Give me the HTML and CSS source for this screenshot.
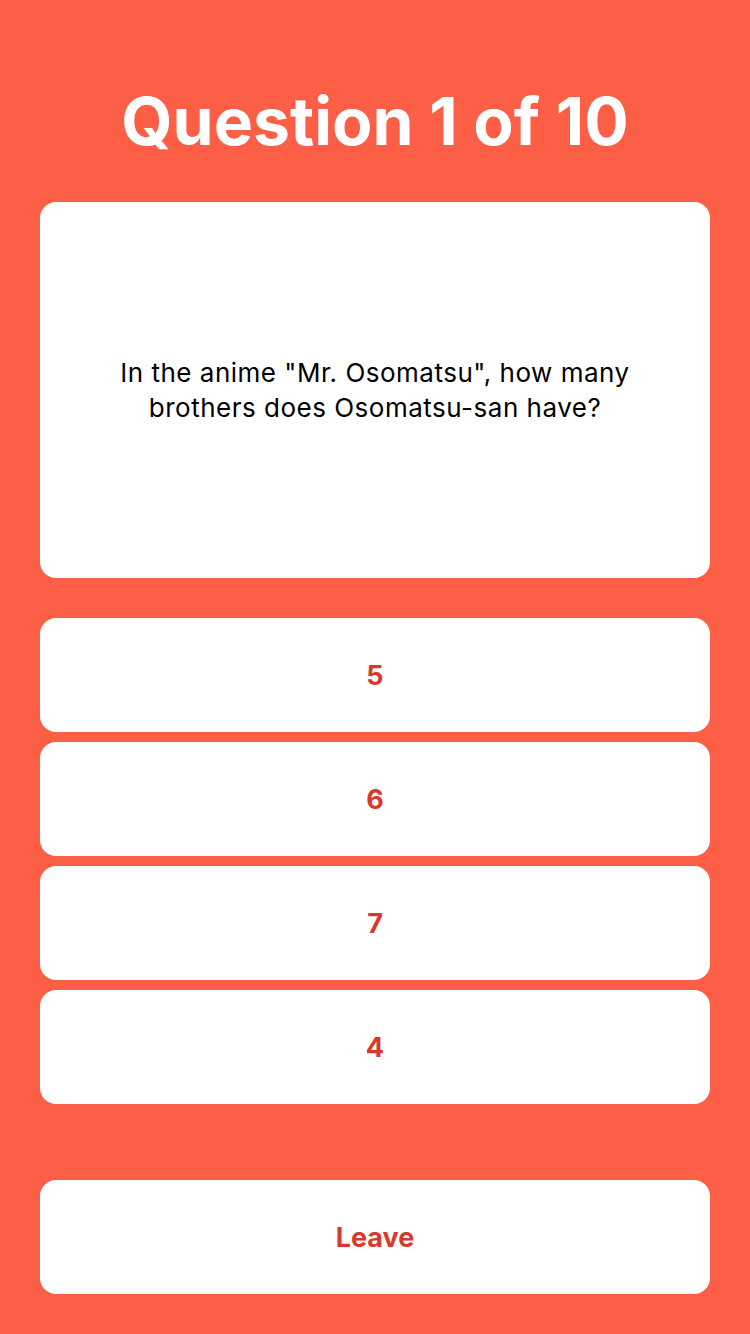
FILE: index.html
```html
<!DOCTYPE html>
<html>
<head>
<meta charset="utf-8">
<link rel="stylesheet" href="styles.css">
</head>
<body>
<div class="screen">
  <h1 class="title">Question 1 of 10</h1>
  <div class="question-card">
    <p class="question-text">In the anime "Mr. Osomatsu", how many brothers does Osomatsu-san have?</p>
  </div>
  <div class="answers">
    <button class="btn">5</button>
    <button class="btn">6</button>
    <button class="btn">7</button>
    <button class="btn">4</button>
  </div>
  <button class="btn leave">Leave</button>
</div>
</body>
</html>
```

FILE: styles.css
```css
html, body {
  margin: 0;
  padding: 0;
  background: #fc5f45;
}
body {
  font-family: Inter, "Noto Sans", sans-serif;
}
.screen {
  width: 750px;
  height: 1334px;
  box-sizing: border-box;
  padding: 0 40px 40px;
  display: flex;
  flex-direction: column;
}
.title {
  margin: 0;
  height: 202px;
  display: flex;
  align-items: center;
  justify-content: center;
  padding-top: 40px;
  box-sizing: border-box;
  color: #fff;
  font-size: 66px;
  font-weight: 700;
  letter-spacing: 0;
}
.question-card {
  height: 376px;
  background: #fff;
  border-radius: 16px;
  display: flex;
  align-items: center;
  justify-content: center;
  padding: 0 40px;
  box-sizing: border-box;
}
.question-text {
  margin: 0;
  text-align: center;
  font-size: 26px;
  line-height: 35px;
  letter-spacing: 0.5px;
  color: #000;
}
.answers {
  margin-top: 40px;
  display: flex;
  flex-direction: column;
  gap: 10px;
}
.btn {
  height: 114px;
  border: none;
  background: #fff;
  border-radius: 16px;
  font-family: Inter, "Noto Sans", sans-serif;
  font-size: 27px;
  font-weight: 700;
  color: #d8392b;
  padding: 0;
  width: 100%;
}
.leave {
  margin-top: 76px;
}
```
